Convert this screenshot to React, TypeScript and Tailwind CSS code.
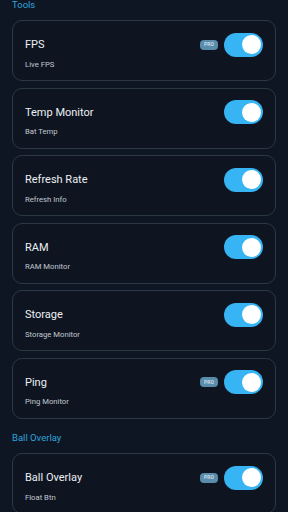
import React from 'react';

interface Tool {
    title: string;
    subtitle: string;
    pro?: boolean;
}

const tools: Tool[] = [
    {title: 'FPS', subtitle: 'Live FPS', pro: true},
    {title: 'Temp Monitor', subtitle: 'Bat Temp'},
    {title: 'Refresh Rate', subtitle: 'Refresh Info'},
    {title: 'RAM', subtitle: 'RAM Monitor'},
    {title: 'Storage', subtitle: 'Storage Monitor'},
    {title: 'Ping', subtitle: 'Ping Monitor', pro: true},
];

const overlay: Tool[] = [{title: 'Ball Overlay', subtitle: 'Float Btn', pro: true}];

function Toggle() {
    return (
        <div className="flex h-[24px] w-[39px] items-center justify-end rounded-full bg-[#37b4f3] pr-[2px]">
            <div className="h-[19px] w-[19px] rounded-full bg-white"/>
        </div>
    );
}

function ToolCard({tool}: { tool: Tool }) {
    return (
        <div className="flex h-[61px] flex-col rounded-[10px] border border-[#2c3845] bg-[#0e1521] px-3 pt-[11.5px]">
            <div className="flex h-[24px] items-center justify-between">
                <span className="text-[11px] leading-none text-[#eceff3]">{tool.title}</span>
                <div className="flex items-center gap-[6px]">
                    {tool.pro && (
                        <span
                            className="flex h-[10px] w-[18px] items-center justify-center rounded-[4px] bg-[#5a8cab] text-[5px] font-bold leading-none text-[#c8dbe7]">
                            PRO
                        </span>
                    )}
                    <Toggle/>
                </div>
            </div>
            <span className="mt-[3px] text-[7.7px] leading-[10px] text-[#c2c8d0]">{tool.subtitle}</span>
        </div>
    );
}

function SectionHeader({label, className}: { label: string; className?: string }) {
    return (
        <div className={`mb-[8.5px] h-[14px] text-[9.5px] leading-[14px] text-[#2ea3dc] ${className ?? ''}`}>
            {label}
        </div>
    );
}

export default function App() {
    return (
        <div
            className="h-[512px] w-[288px] overflow-hidden bg-[#0f1623] px-3"
            style={{fontFamily: 'Roboto, "Noto Sans", sans-serif'}}
        >
            <SectionHeader label="Tools" className="-mt-[2.5px]"/>
            <div className="flex flex-col gap-[6.5px]">
                {tools.map((t) => (
                    <ToolCard key={t.title} tool={t}/>
                ))}
            </div>
            <SectionHeader label="Ball Overlay" className="mt-[12px]"/>
            <div className="flex flex-col gap-[6.5px]">
                {overlay.map((t) => (
                    <ToolCard key={t.title} tool={t}/>
                ))}
            </div>
        </div>
    );
}
